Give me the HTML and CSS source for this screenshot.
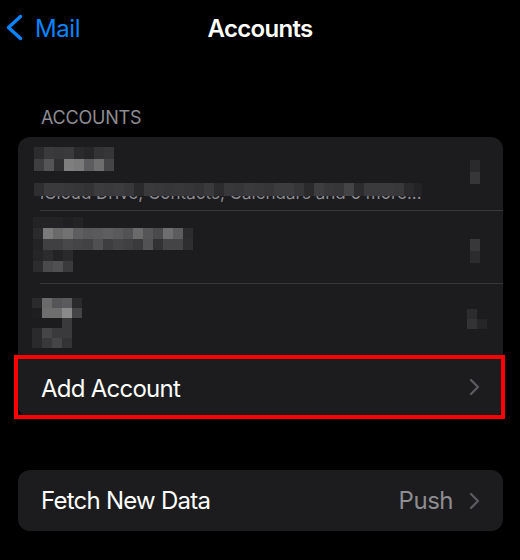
FILE: index.html
```html
<!DOCTYPE html>
<html lang="en">
<head>
<meta charset="utf-8">
<title>Accounts</title>
<link rel="stylesheet" href="styles.css">
</head>
<body>
<header class="nav">
  <a class="back" href="#">
    <svg class="back-icon" width="18" height="30" viewBox="0 0 18 30" aria-hidden="true"><polyline points="14.5,2.5 2.5,13.5 14.5,24.5" fill="none" stroke="#0a84ff" stroke-width="3.4" stroke-linecap="round" stroke-linejoin="round"/></svg>
    <span>Mail</span>
  </a>
  <h1 class="title">Accounts</h1>
  <span></span>
</header>

<main class="content">
  <h2 class="section-label">ACCOUNTS</h2>
  <section class="card">
    <div class="row row-acc1">
      <div class="left">
        <div class="mosaic m-8x12">
          <i class="g2c"></i><i class="g3a"></i><i class="g38"></i><i class="g3a"></i><i class="g2a"></i><i class="g26"></i><i class="g33"></i><i class="g36"></i>
          <i class="g3e"></i><i class="g55"></i><i class="g30"></i><i class="g7e"></i><i class="g7a"></i><i class="g5c"></i><i class="g6e"></i><i class="g44"></i>
        </div>
        <div class="subtitle">
          <span class="subtitle-text">iCloud Drive, Contacts, Calendars and 6 more...</span>
          <div class="mosaic strip">
            <i class="g2e"></i><i class="g3a"></i><i class="g3a"></i><i class="g38"></i><i class="g36"></i><i class="g33"></i><i class="g3c"></i><i class="g3a"></i><i class="g3c"></i><i class="g38"></i>
            <i class="g2a"></i><i class="g3a"></i><i class="g38"></i><i class="g36"></i><i class="g38"></i><i class="g36"></i><i class="g33"></i><i class="g3a"></i><i class="g2c"></i><i class="g38"></i>
            <i class="g36"></i><i class="g3a"></i><i class="g38"></i><i class="g36"></i><i class="g3c"></i><i class="g3c"></i><i class="g36"></i><i class="g2a"></i><i class="g3e"></i><i class="g38"></i>
            <i class="g36"></i><i class="g44"></i><i class="g2c"></i><i class="g3a"></i><i class="g3a"></i><i class="g3a"></i><i class="g38"></i><i class="g2a"></i><i class="g22"></i><i class="g20"></i>
          </div>
        </div>
      </div>
      <div class="mosaic m-1x12 right-acc1"><i class="g2a"></i><i class="g36"></i></div>
    </div>
    <div class="sep"></div>
    <div class="row row-acc2">
      <div class="mosaic m-16x11">
        <i class="g22"></i><i class="g22"></i><i class="g22"></i><i class="g20"></i><i class="g22"></i><i></i><i></i><i></i><i></i><i></i><i></i><i></i><i></i><i></i><i></i><i></i>
        <i class="g2a"></i><i class="g7a"></i><i class="g6a"></i><i class="g72"></i><i class="g5e"></i><i class="g58"></i><i class="g5a"></i><i class="g5e"></i><i class="g5a"></i><i class="g52"></i><i class="g6a"></i><i class="g55"></i><i class="g4a"></i><i class="g6e"></i><i class="g5c"></i><i class="g2c"></i>
        <i class="g22"></i><i class="g40"></i><i class="g40"></i><i class="g48"></i><i class="g44"></i><i class="g42"></i><i class="g50"></i><i class="g3e"></i><i class="g44"></i><i class="g40"></i><i class="g3a"></i><i class="g52"></i><i class="g32"></i><i class="g44"></i><i class="g44"></i><i class="g2e"></i>
        <i class="g24"></i><i class="g2c"></i><i class="g22"></i><i class="g2a"></i><i></i><i></i><i></i><i></i><i></i><i></i><i></i><i></i><i></i><i></i><i></i><i></i>
        <i class="g2c"></i><i class="g4a"></i><i class="g50"></i><i class="g3a"></i><i></i><i></i><i></i><i></i><i></i><i></i><i></i><i></i><i></i><i></i><i></i><i></i>
      </div>
      <div class="mosaic m-1x12 right-acc2"><i class="g38"></i><i class="g2c"></i></div>
    </div>
    <div class="sep"></div>
    <div class="row row-acc3">
      <div class="mosaic m-5x10">
        <i class="g2a"></i><i class="g6a"></i><i class="g55"></i><i class="g5a"></i><i class="g2a"></i>
        <i class="g1e"></i><i class="g6e"></i><i class="g6e"></i><i class="g8a"></i><i class="g44"></i>
        <i></i><i></i><i></i><i class="g3a"></i><i></i>
        <i class="g2a"></i><i class="g45"></i><i class="g3a"></i><i class="g3a"></i><i></i>
        <i class="g2a"></i><i class="g38"></i><i class="g45"></i><i class="g33"></i><i></i>
      </div>
      <div class="mosaic m-2x10 right-acc3"><i class="g2c"></i><i></i><i class="g33"></i><i class="g26"></i></div>
    </div>
    <div class="sep"></div>
    <div class="row row-link row-last">
      <span class="label">Add Account</span>
      <svg class="chev" width="12" height="18" viewBox="0 0 12 18" aria-hidden="true"><polyline points="2,2 9,9 2,16" fill="none" stroke="#5a5a5e" stroke-width="2.4" stroke-linecap="round" stroke-linejoin="round"/></svg>
      <div class="highlight"></div>
    </div>
  </section>

  <section class="card card-fetch">
    <div class="row row-link row-only">
      <span class="label">Fetch New Data</span>
      <span class="value">Push
        <svg class="chev" width="12" height="18" viewBox="0 0 12 18" aria-hidden="true"><polyline points="2,2 9,9 2,16" fill="none" stroke="#5a5a5e" stroke-width="2.4" stroke-linecap="round" stroke-linejoin="round"/></svg>
      </span>
    </div>
  </section>
</main>
</body>
</html>
```
FILE: styles.css
```css
* { box-sizing: border-box; }

html, body {
  margin: 0;
  background: #000;
}

body {
  font-family: Inter, "Noto Sans", sans-serif;
  color: #fff;
  width: 520px;
  height: 560px;
  overflow: hidden;
}

.nav {
  display: grid;
  grid-template-columns: 1fr auto 1fr;
  align-items: center;
  height: 54px;
  padding: 13px 0;
}

.back {
  display: flex;
  align-items: center;
  gap: 11px;
  margin-left: 6px;
  color: #0a84ff;
  text-decoration: none;
  font-size: 24px;
  line-height: 28px;
  letter-spacing: -0.4px;
}

.back-icon { display: block; margin-top: 1px; }

.title {
  margin: 0;
  font-size: 24px;
  line-height: 28px;
  font-weight: 600;
  color: #fff;
  letter-spacing: -0.7px;
}

.content {
  padding: 0 17px 0 18px;
}

.section-label {
  margin: 53px 0 8px 23px;
  font-size: 18px;
  line-height: 22px;
  font-weight: 400;
  color: #8d8d93;
  letter-spacing: -0.2px;
}

.card {
  background: #1c1c1e;
  border-radius: 12px;
}

.card-fetch {
  margin-top: 53px;
}

.row {
  position: relative;
  display: flex;
  justify-content: space-between;
  align-items: flex-start;
}

.sep {
  height: 1px;
  margin-left: 22px;
  background: #38383a;
}

.row-acc1 { height: 73px; padding: 10px 23px 0 16px; }
.row-acc2 { height: 72px; padding: 6px 23px 0 15px; }
.row-acc3 { height: 72px; padding: 14px 16px 0 14px; }

.right-acc1 { margin-top: 13px; }
.right-acc2 { margin-top: 22px; }
.right-acc3 { margin-top: 11px; }

.left {
  display: flex;
  flex-direction: column;
}

.subtitle {
  position: relative;
  margin-top: 12px;
  height: 20px;
  overflow: hidden;
}

.subtitle-text {
  display: block;
  padding-left: 6px;
  font-size: 17px;
  line-height: 20px;
  color: #8e8e93;
  white-space: nowrap;
  letter-spacing: 0;
}

.mosaic { display: grid; }
.mosaic i { display: block; }

.m-8x12 { grid-template-columns: repeat(8, 10px); grid-auto-rows: 12px; }
.m-1x12 { grid-template-columns: 10px; grid-auto-rows: 12px; }
.m-16x11 { grid-template-columns: repeat(16, 10px); grid-auto-rows: 11px; }
.m-5x10 { grid-template-columns: repeat(5, 10px); grid-auto-rows: 10px; }
.m-2x10 { grid-template-columns: repeat(2, 10px); grid-auto-rows: 10px; }

.strip {
  position: absolute;
  left: 0;
  top: 0;
  grid-template-columns: repeat(40, 10px);
  grid-auto-rows: 13px;
  background: #1c1c1e;
}

.g1e { background: #1e1e20; }
.g20 { background: #202022; }
.g22 { background: #232325; }
.g24 { background: #252527; }
.g26 { background: #262628; }
.g2a { background: #2a2a2c; }
.g2c { background: #2c2c2e; }
.g2e { background: #2e2e30; }
.g30 { background: #303032; }
.g32 { background: #323234; }
.g33 { background: #333335; }
.g36 { background: #363638; }
.g38 { background: #38383a; }
.g3a { background: #3a3a3c; }
.g3c { background: #3c3c3e; }
.g3e { background: #3e3e40; }
.g40 { background: #404042; }
.g42 { background: #424244; }
.g44 { background: #444446; }
.g45 { background: #454547; }
.g48 { background: #48484a; }
.g4a { background: #4a4a4c; }
.g50 { background: #505052; }
.g52 { background: #525254; }
.g55 { background: #555557; }
.g58 { background: #58585a; }
.g5a { background: #5a5a5c; }
.g5c { background: #5c5c5e; }
.g5e { background: #5e5e60; }
.g6a { background: #6a6a6b; }
.g6e { background: #6e6e6f; }
.g72 { background: #727273; }
.g7a { background: #7a7a7b; }
.g7e { background: #7e7e7f; }
.g8a { background: #8a8a8b; }

.row-link {
  height: 60px;
  align-items: center;
  padding: 0 22px 0 23px;
}

.row-last { border-radius: 0 0 12px 12px; padding-top: 3px; }
.row-only { height: 61px; }

.label {
  font-size: 24px;
  line-height: 28px;
  color: #fff;
  letter-spacing: -0.75px;
}

.value {
  display: flex;
  align-items: center;
  gap: 16px;
  font-size: 24px;
  line-height: 28px;
  color: #8d8d92;
  letter-spacing: -0.5px;
}

.chev { display: block; }

.row-last .chev { margin-top: -3px; }

.highlight {
  position: absolute;
  left: -4px;
  right: -2px;
  top: -2px;
  bottom: -2px;
  border: 4px solid #ff0000;
  pointer-events: none;
}
```
